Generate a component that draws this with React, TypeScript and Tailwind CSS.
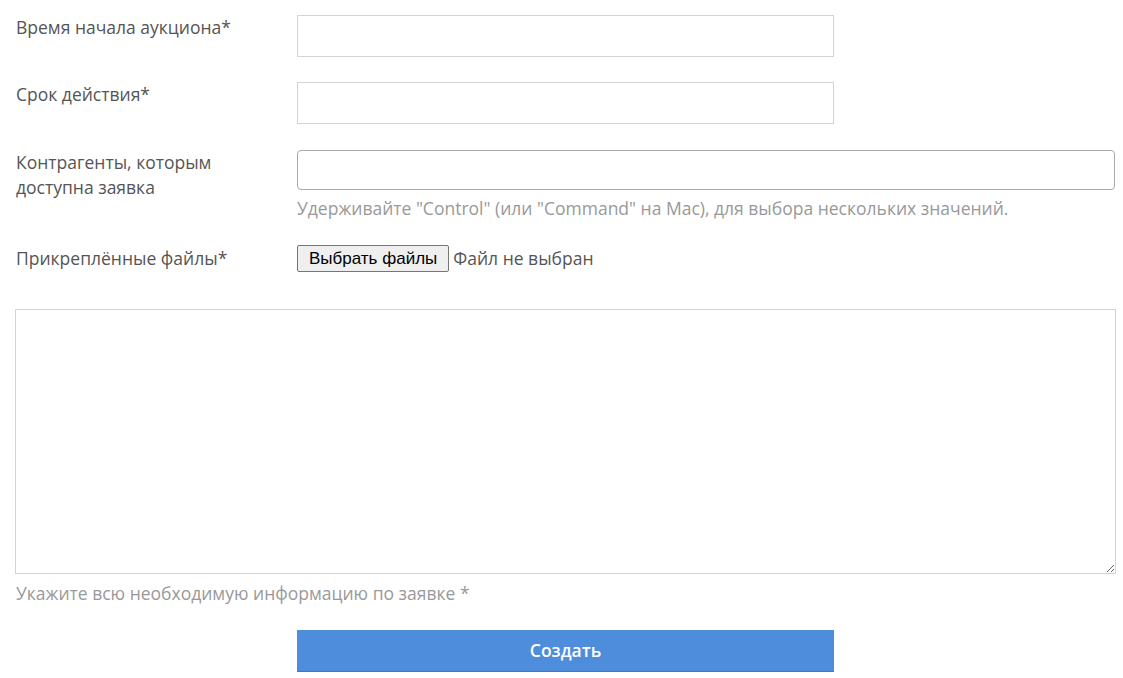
import React, { useState } from "react";

const App: React.FC = () => {
  const [startTime, setStartTime] = useState<string>("");
  const [term, setTerm] = useState<string>("");
  const [info, setInfo] = useState<string>("");

  return (
    <div className="bg-white min-h-screen pl-[15px] pr-[8px] pt-[15px] font-['Open_Sans',sans-serif] text-[17.5px] text-[#555]">
      <form onSubmit={(e) => e.preventDefault()}>
        <div className="flex">
          <label className="w-[282px] pl-[1px] leading-[24px]">Время начала аукциона*</label>
          <input
            type="text"
            value={startTime}
            onChange={(e) => setStartTime(e.target.value)}
            className="w-[537px] h-[42px] border border-[#d3d3d3] px-3 outline-none"
          />
        </div>

        <div className="flex mt-[25px]">
          <label className="w-[282px] pl-[1px] leading-[24px]">Срок действия*</label>
          <input
            type="text"
            value={term}
            onChange={(e) => setTerm(e.target.value)}
            className="w-[537px] h-[42px] border border-[#d3d3d3] px-3 outline-none"
          />
        </div>

        <div className="flex mt-[26px]">
          <label className="w-[282px] pl-[1px] leading-[25px]">
            Контрагенты, которым
            <br />
            доступна заявка
          </label>
          <div className="flex-1">
            <div className="h-[40px] border border-[#aaa] rounded-[4px]" />
            <p className="mt-[6px] leading-[24px] text-[#999]">
              Удерживайте "Control" (или "Command" на Mac), для выбора нескольких значений.
            </p>
          </div>
        </div>

        <div className="flex mt-[26px]">
          <label className="w-[282px] pl-[1px] leading-[24px]">Прикреплённые файлы*</label>
          <div className="flex items-center h-[27px] -mt-[1px]">
            <button
              type="button"
              className="h-[27px] px-[11px] bg-[#efefef] border border-[#767676] rounded-[2px] font-['Liberation_Sans',sans-serif] text-[17px] text-black"
            >
              Выбрать файлы
            </button>
            <span className="ml-[4px]">Файл не выбран</span>
          </div>
        </div>

        <textarea
          value={info}
          onChange={(e) => setInfo(e.target.value)}
          className="block mt-[37px] w-[1101px] h-[265px] border border-[#d3d3d3] p-3 outline-none"
        />
        <p className="mt-[7px] pl-[1px] leading-[24px] text-[#999]">
          Укажите всю необходимую информацию по заявке *
        </p>

        <div className="pl-[282px] mt-[25px]">
          <button
            type="submit"
            className="w-[537px] h-[42px] bg-[#4e8ddb] border-b border-[#3d78c0] text-white font-semibold"
          >
            Создать
          </button>
        </div>
      </form>
    </div>
  );
};

export default App;
